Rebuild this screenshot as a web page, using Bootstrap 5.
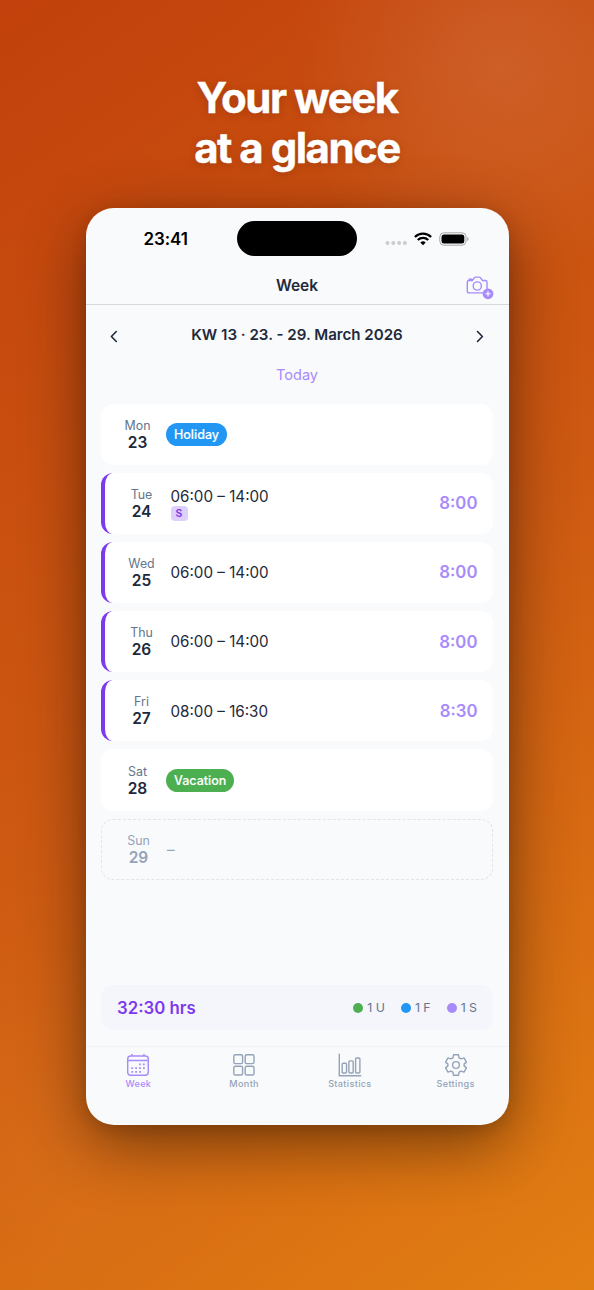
<!DOCTYPE html>
<html lang="en">
<head>
<meta charset="utf-8">
<meta name="viewport" content="width=device-width, initial-scale=1">
<title>Your week at a glance</title>
<link rel="stylesheet" href="https://cdn.jsdelivr.net/npm/bootstrap@5.3.0/dist/css/bootstrap.min.css">
<style>
  body { font-family: Inter, "Liberation Sans", sans-serif; color: #1e293b; }
  .poster { width: 594px; height: 1290px; padding-top: 72.5px;
    background: radial-gradient(circle 215px at 500px 65px, rgba(255,255,255,.1), rgba(255,255,255,0) 100%),
      radial-gradient(circle 200px at 60px 1130px, rgba(255,255,255,.025), rgba(255,255,255,0) 100%),
      linear-gradient(145deg, #c2410c 0%, #ce5a12 52%, #e27f13 100%); }
  .headline { font-size: 42px; line-height: 50px; font-weight: 700; letter-spacing: -1.5px; height: 135px; text-shadow: 0 2px 8px rgba(0,0,0,.16); -webkit-text-stroke: .4px #fff; }
  .device { width: 423px; height: 917.5px; border-radius: 28px; background: #f9fafc; box-shadow: 0 20px 65px rgba(0,0,0,.46), 0 4px 16px rgba(0,0,0,.12); }
  .status { height: 62px; }
  .clock, .signals { width: 151.5px; }
  .clock { font-size: 17px; font-weight: 600; color: #000; padding: 2px 0 0 58px; letter-spacing: -.1px; }
  .island { width: 120px; height: 35px; border-radius: 18px; background: #000; }
  .signals { padding-right: 40px; gap: 7px; }
  .titlebar { height: 35px; border-bottom: 1px solid #d6d8dc; font-size: 15.5px; font-weight: 600; padding-bottom: 1px; }
  .titlebar svg { right: 15px; top: 5px; }
  .weeknav { height: 62px; padding: 0 24px; font-size: 15.1px; font-weight: 600; }
  .today { height: 18px; font-size: 14.6px; line-height: 17px; color: #a78bfa; }
  .days { padding: 0 15.5px; gap: 8px; margin-top: 19px; }
  .day { height: 61.2px; border-radius: 12px; background: #fff; padding: 0 15.500px 0 16px; }
  .day.work { border-left: 4px solid #7c3aed; }
  .day.off { background: transparent; border: 1px dashed #e0e4eb; padding-left: 16px; }
  .date { width: 41px; font-size: 12.4px; line-height: 16px; color: #64748b; }
  .date b { font-size: 15.5px; line-height: 17px; font-weight: 600; color: #1e293b; }
  .off .date, .off .date b, .off .dash { color: #94a3b8; }
  .slot { margin-left: 8px; font-size: 15.2px; line-height: 18px; }
  .work .slot { margin-left: 8.5px; }
  .hours { padding-top: 1px; }
  .work .plain, .off .dash { padding-top: 1.5px; }
  .hours { font-size: 16.8px; font-weight: 600; color: #a78bfa; }
  .tag { font-size: 12.5px; font-weight: 500; -webkit-text-stroke: .15px #fff; line-height: 23px; height: 23px; padding: 0 8px; border-radius: 12px; color: #fff; display: block; }
  .tag-blue { background: #2196f3; } .tag-green { background: #4caf50; }
  .mini { width: 17px; height: 15px; line-height: 15px; border-radius: 4px; background: #ddd0fd; color: #7c3aed; font-size: 10.5px; font-weight: 600; }
  .work .badged { padding-top: 1.500px; }
  .summary { height: 45px; margin: auto 15.5px 16px; padding: 1px 16px 0; border-radius: 12px; background: #f5f6fb; }
  .total { font-size: 16.8px; font-weight: 600; color: #7c3aed; padding-top: 2px; }
  .legend { gap: 16px; font-size: 12.3px; color: #64748b; line-height: 18px; }
  .legend span { padding-top: 1px; }
  .dot { width: 10px; height: 10px; border-radius: 50%; margin: -1px 4px 0 0; }
  .dot-violet { background: #a78bfa; }
  .tabs { height: 79.5px; border-top: 1px solid #f0f2f7; padding-top: 6px; color: #94a3b8; font-size: 9.1px; font-weight: 500; letter-spacing: .35px; line-height: 12px; }
  .tabs .on { color: #a78bfa; }
  .tabs svg { display: block; margin-bottom: 1.500px; }
</style>
</head>
<body>
<main class="poster d-flex flex-column align-items-center overflow-hidden">
  <h1 class="headline text-white text-center m-0">Your week<br>at a glance</h1>
  <section class="device d-flex flex-column overflow-hidden flex-shrink-0">
    <div class="status d-flex align-items-center">
      <div class="clock">23:41</div>
      <div class="island"></div>
      <div class="signals d-flex align-items-center justify-content-end">
        <svg width="22" height="14" fill="#cbccd0"><circle cx="2.5" cy="11" r="2"/><circle cx="8.3" cy="11" r="2"/><circle cx="14.1" cy="11" r="2"/><circle cx="19.9" cy="11" r="2"/></svg>
        <svg width="18" height="14" viewBox="0 0 18 14" fill="none" stroke="#000" stroke-width="2.3"><path d="M.9 5A11.6 11.6 0 0 1 17.1 5M3.8 8A7.4 7.4 0 0 1 14.2 8"/><path d="M9 13.3 6.3 10.6A3.9 3.9 0 0 1 11.7 10.6Z" fill="#000" stroke="none"/></svg>
        <svg width="30" height="14" viewBox="0 0 30 14"><rect x=".8" y=".8" width="26.2" height="12.4" rx="4" fill="none" stroke="#a5a6a8"/><rect x="2.5" y="2.5" width="22.8" height="9" rx="2.5"/><path d="M28.2 5v4q1.4-.6 1.4-2T28.2 5" fill="#a5a6a8"/></svg>
      </div>
    </div>
    <header class="titlebar position-relative d-flex justify-content-center align-items-center">
      <span>Week</span>
      <svg class="position-absolute" width="28" height="26" viewBox="0 0 28 26" fill="none" stroke="#a78bfa" stroke-width="1.4"><path d="M3 5.5h3.3l2.1-2.8q.4-.6 1.1-.6h3.8q.7 0 1.1.6l2.1 2.8h2.8q1.7 0 1.7 1.7v9q0 1.7-1.7 1.7H3q-1.7 0-1.7-1.7v-9q0-1.7 1.7-1.7ZM3.2 5.3V4.2h2.3v1.1"/><circle cx="11.3" cy="11" r="4.1"/><circle cx="22" cy="18.8" r="5.4" fill="#a78bfa" stroke="none"/><path d="M19.4 18.8h5.2M22 16.2v5.2" stroke="#fff" stroke-width="1.1"/></svg>
    </header>
    <nav class="weeknav d-flex align-items-center justify-content-between">
      <svg width="8" height="14" fill="none" stroke="#1e293b" stroke-width="1.6" stroke-linecap="round" stroke-linejoin="round"><path d="M6.300 2.500 1.400 7.500l4.900 5"/></svg>
      <span>KW 13 · 23. - 29. March 2026</span>
      <svg width="8" height="14" fill="none" stroke="#1e293b" stroke-width="1.6" stroke-linecap="round" stroke-linejoin="round"><path d="M1.500 2.500l4.900 5-4.900 5"/></svg>
    </nav>
    <div class="today text-center">Today</div>
    <div class="days d-flex flex-column">
      <div class="day d-flex align-items-center"><div class="date text-center">Mon<b class="d-block">23</b></div><div class="slot"><span class="tag tag-blue">Holiday</span></div></div>
      <div class="day work d-flex align-items-center"><div class="date text-center">Tue<b class="d-block">24</b></div><div class="slot badged">06:00 – 14:00<div class="mini text-center">S</div></div><div class="hours ms-auto">8:00</div></div>
      <div class="day work d-flex align-items-center"><div class="date text-center">Wed<b class="d-block">25</b></div><div class="slot plain">06:00 – 14:00</div><div class="hours ms-auto">8:00</div></div>
      <div class="day work d-flex align-items-center"><div class="date text-center">Thu<b class="d-block">26</b></div><div class="slot plain">06:00 – 14:00</div><div class="hours ms-auto">8:00</div></div>
      <div class="day work d-flex align-items-center"><div class="date text-center">Fri<b class="d-block">27</b></div><div class="slot plain">08:00 – 16:30</div><div class="hours ms-auto">8:30</div></div>
      <div class="day d-flex align-items-center"><div class="date text-center">Sat<b class="d-block">28</b></div><div class="slot"><span class="tag tag-green">Vacation</span></div></div>
      <div class="day off d-flex align-items-center"><div class="date text-center">Sun<b class="d-block">29</b></div><div class="slot dash">–</div></div>
    </div>
    <div class="summary d-flex align-items-center justify-content-between">
      <div class="total">32:30 hrs</div>
      <div class="legend d-flex">
        <span class="d-flex align-items-center"><i class="dot tag-green"></i>1 U</span>
        <span class="d-flex align-items-center"><i class="dot tag-blue"></i>1 F</span>
        <span class="d-flex align-items-center"><i class="dot dot-violet"></i>1 S</span>
      </div>
    </div>
    <nav class="tabs row g-0">
      <div class="col on d-flex flex-column align-items-center">
        <svg width="24" height="24" viewBox="0 0 24 24" fill="none" stroke="currentColor" stroke-width="1.4"><rect x="1.7" y="3" width="20.6" height="19.3" rx="3"/><path d="M1.7 7.500h20.600M6 1v2M18 1v2"/><path d="M13 11.300h8M5.300 15.100h15M5.300 18.900h11" stroke-width="1.800" stroke-dasharray="1.800 2.100"/></svg>Week</div>
      <div class="col d-flex flex-column align-items-center">
        <svg width="24" height="24" viewBox="0 0 24 24" fill="none" stroke="currentColor" stroke-width="1.400"><rect x="1.800" y="1.800" width="8.800" height="8.800" rx="1.600"/><rect x="13.200" y="1.800" width="8.800" height="8.800" rx="1.600"/><rect x="1.800" y="13.200" width="8.800" height="8.800" rx="1.600"/><rect x="13.200" y="13.200" width="8.800" height="8.800" rx="1.600"/></svg>Month</div>
      <div class="col d-flex flex-column align-items-center">
        <svg width="24" height="24" viewBox="0 0 24 24" fill="none" stroke="currentColor" stroke-width="1.400"><path d="M1.300.7v22h22"/><rect x="4.200" y="10.300" width="4.300" height="9.700" rx="1"/><rect x="10.900" y="7.900" width="4.300" height="12.100" rx="1"/><rect x="17.600" y="5" width="4.300" height="15" rx="1"/></svg>Statistics</div>
      <div class="col d-flex flex-column align-items-center">
        <svg width="24" height="24" viewBox="0 0 24 24" fill="none" stroke="currentColor" stroke-width="1.400" stroke-linejoin="round"><path d="M9.600 1.700h4.800l.7 3.100 1.900 1.100 3-1 2.400 4.200-2.300 2v1.800l2.300 2-2.400 4.200-3-1-1.900 1.100-.7 3.100H9.600l-.7-3.100L7 18.100l-3 1-2.400-4.200 2.300-2v-1.800l-2.300-2L4 4.900l3 1 1.900-1.100Z"/><circle cx="12" cy="12" r="3.400"/></svg>Settings</div>
    </nav>
  </section>
</main>
<script src="https://cdn.jsdelivr.net/npm/bootstrap@5.3.0/dist/js/bootstrap.bundle.min.js"></script>
</body>
</html>
